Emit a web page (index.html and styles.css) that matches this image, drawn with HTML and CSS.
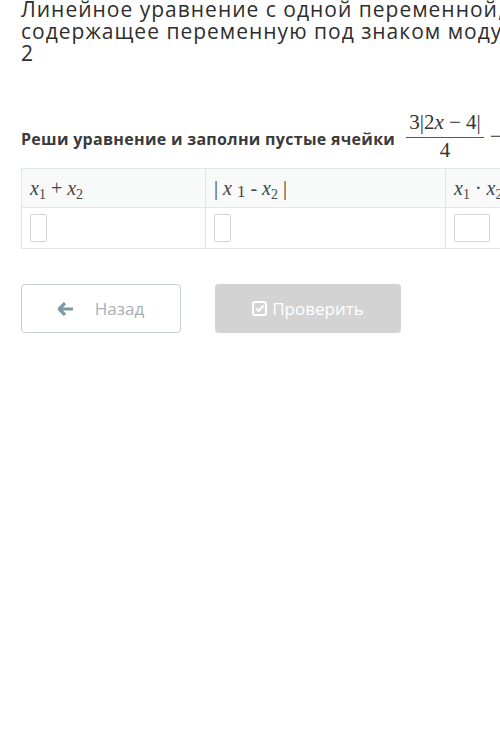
FILE: index.html
```html
<!DOCTYPE html>
<html lang="ru">
<head>
  <meta charset="UTF-8">
  <meta name="viewport" content="width=device-width, initial-scale=1.0">
  <title>Линейное уравнение с модулем</title>
  <link rel="stylesheet" href="styles.css">
</head>
<body>
  <div class="page">
    <h1 class="title">
      <span class="line">Линейное уравнение с одной переменной,</span>
      <span class="line">содержащее переменную под знаком модуля. Урок</span>
      <span class="line">2</span>
    </h1>

    <div class="task">
      <span class="task-text">Реши уравнение и заполни пустые ячейки</span>
      <span class="frac">
        <span class="num">3|2<i>x</i> &minus; 4|</span>
        <span class="den">4</span>
      </span>
      <span class="op">&minus;</span>
    </div>

    <table class="grid">
      <tr class="head">
        <td class="c1"><span class="m"><i>x</i><sub>1</sub> + <i>x</i><sub>2</sub></span></td>
        <td class="c2"><span class="m">| <i>x</i> <span class="lo">1</span> - <i>x</i><sub>2</sub> |</span></td>
        <td class="c3"><span class="m"><i>x</i><sub>1</sub> &middot; <i>x</i><sub>2</sub></span></td>
      </tr>
      <tr>
        <td><input class="cell-input" type="text"></td>
        <td><input class="cell-input" type="text"></td>
        <td><input class="cell-input wide" type="text"></td>
      </tr>
    </table>

    <div class="actions">
      <button class="btn back">
        <svg width="16" height="14" viewBox="0 0 16 14"><path d="M7 1 L1 7 L7 13 M1.5 7 H15" fill="none" stroke="currentColor" stroke-width="3.2" stroke-linejoin="round"/></svg>
        <span>Назад</span>
      </button>
      <button class="btn check">
        <svg width="15" height="15" viewBox="0 0 15 15"><rect x="1" y="1" width="13" height="13" rx="2" fill="none" stroke="currentColor" stroke-width="2"/><path d="M4 7.5 L6.5 10 L11.5 4.5" fill="none" stroke="currentColor" stroke-width="2"/></svg>
        <span>Проверить</span>
      </button>
    </div>
  </div>
</body>
</html>
```

FILE: styles.css
```css
* {
  box-sizing: border-box;
  margin: 0;
  padding: 0;
}

body {
  background: #fff;
  overflow: hidden;
  font-family: 'Open Sans', sans-serif;
  color: #333;
}

.page {
  width: 820px;
  padding-left: 21px;
}

.title {
  margin-top: -2px;
  font-size: 21px;
  font-weight: 400;
  line-height: 22px;
  letter-spacing: 1px;
  color: #2e2e2e;
}

.title .line {
  display: block;
  white-space: nowrap;
}

.task {
  display: flex;
  align-items: flex-start;
  margin-top: 46px;
  white-space: nowrap;
}

.task-text {
  margin-top: 18px;
  font-size: 16px;
  font-weight: 700;
  line-height: 22px;
  letter-spacing: 0.3px;
  color: #3a3a3a;
}

.frac {
  display: inline-flex;
  flex-direction: column;
  align-items: center;
  margin-left: 11px;
  font-family: 'Liberation Serif', serif;
  font-size: 21px;
  color: #333;
}

.frac .num {
  padding: 0 3px 3px;
  border-bottom: 1px solid #555;
  line-height: 24px;
}

.frac .den {
  line-height: 24px;
}

.op {
  margin: 14px 0 0 6px;
  font-family: 'Liberation Serif', serif;
  font-size: 21px;
  line-height: 24px;
}

.grid {
  margin-top: 6px;
  border-collapse: collapse;
  table-layout: fixed;
}

.grid td {
  border: 1px solid #e2e5e5;
  padding: 0 8px;
  vertical-align: middle;
}

.grid .c1 { width: 184px; }
.grid .c2 { width: 240px; }
.grid .c3 { width: 200px; }

.grid .head td {
  height: 39px;
  background: #f8f9f9;
}

.grid tr:last-child td {
  height: 41px;
}

.m {
  font-family: 'Liberation Serif', serif;
  font-size: 20px;
  color: #444;
}

.m sub {
  font-style: normal;
  font-size: 14px;
  vertical-align: -4px;
  line-height: 0;
}

.m .lo {
  font-size: 17px;
  position: relative;
  top: 2px;
}

.cell-input {
  display: block;
  width: 17px;
  height: 28px;
  border: 1px solid #d4d7d7;
  border-radius: 2px;
  background: #fff;
}

.cell-input.wide {
  width: 36px;
}

.actions {
  display: flex;
  gap: 34px;
  margin-top: 35px;
}

.btn {
  display: flex;
  align-items: center;
  justify-content: center;
  height: 49px;
  font-family: 'Open Sans', sans-serif;
  font-size: 17px;
  border-radius: 4px;
}

.btn.back {
  width: 160px;
  background: #fff;
  border: 1px solid #c9ced1;
  color: #a6b0b5;
  gap: 21px;
}

.btn.back svg {
  color: #7f98a5;
}

.btn.check {
  width: 186px;
  background: #d3d3d3;
  border: none;
  color: #fff;
  gap: 5px;
}
```
